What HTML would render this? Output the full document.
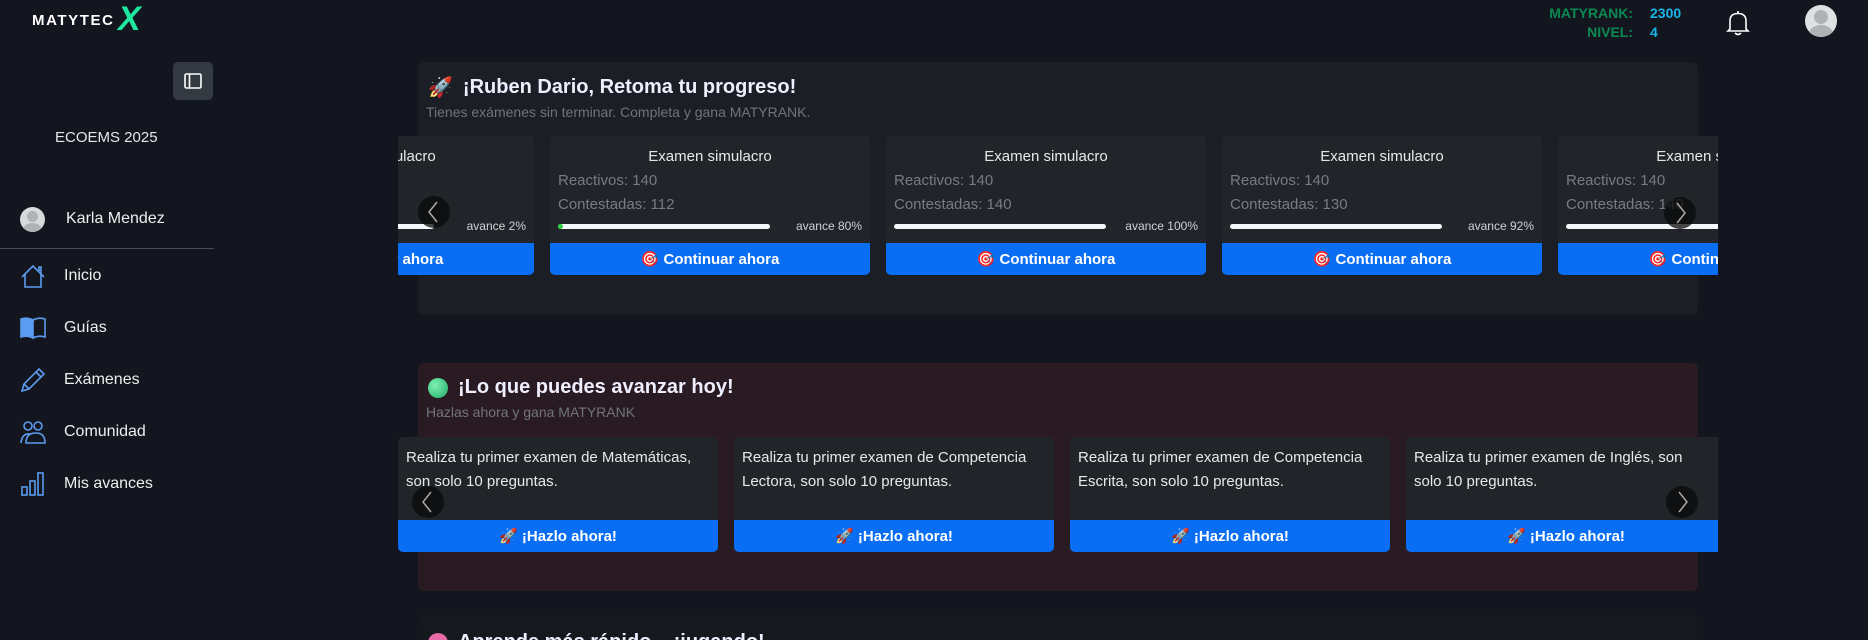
<!DOCTYPE html>
<html><head><meta charset="utf-8"><style>
*{box-sizing:border-box;margin:0;padding:0}
html,body{width:1868px;height:640px;overflow:hidden}
body{background:#13161e;font-family:"Liberation Sans","Noto Sans CJK JP",sans-serif;color:#e6e6e6;position:relative}
.a{position:absolute}
.nav{position:absolute;left:20px;display:flex;align-items:center;font-size:16px;color:#eee}
.nav svg{width:26px;height:26px;margin-right:18px}
.panel{position:absolute;left:418px;width:1280px;border-radius:6px}
.ptitle{position:absolute;left:10px;font-size:20px;font-weight:bold;color:#eef;display:flex;align-items:center;gap:10px}
.psub{position:absolute;left:8px;font-size:14px;color:#6f757d}
.clip{position:absolute;left:398px;width:1320px;overflow:hidden}
.card{position:absolute;top:0;width:320px;background:#212529;border-radius:5px;overflow:hidden}
.c1 .t{position:absolute;top:12px;left:0;right:0;text-align:center;font-size:15px;color:#e8e8e8}
.c1 .r{position:absolute;left:8px;font-size:15px;color:#777c82}
.bar{position:absolute;left:8px;top:88px;width:212px;height:5px;border-radius:3px;background:#f5f7fa}
.av{position:absolute;right:8px;top:83px;font-size:12px;color:#cfd3d8}
.btn{position:absolute;left:0;right:0;bottom:0;height:32px;background:#0a6ef4;color:#fff;font-weight:bold;font-size:15px;display:flex;align-items:center;justify-content:center;gap:10px}
.c2 .t{position:absolute;top:9px;left:8px;right:22px;font-size:15px;line-height:24px;color:#e8e8e8}
.arr{position:absolute;width:32px;height:32px;border-radius:50%;background:rgba(10,10,10,.75)}
</style></head><body>

<!-- logo -->
<div class="a" style="left:32px;top:12px;font-size:15px;font-weight:bold;letter-spacing:1.6px;color:#fff">MATYTEC</div>
<div class="a" style="left:118px;top:1px;font-size:34px;font-weight:900;color:#1ee8a0;font-style:italic;line-height:36px">X</div>

<!-- toggle -->
<div class="a" style="left:173px;top:62px;width:40px;height:38px;background:#343a42;border-radius:5px">
<svg class="a" style="left:11px;top:11px" width="18" height="16" viewBox="0 0 18 16"><rect x="1" y="1" width="16" height="14" rx="1.5" fill="none" stroke="#fff" stroke-width="1.6"/><line x1="5.5" y1="1" x2="5.5" y2="15" stroke="#fff" stroke-width="1.6"/></svg></div>

<div class="a" style="left:55px;top:129px;font-size:15px;color:#e6e6e6">ECOEMS 2025</div>

<div class="a" style="left:20px;top:207px;width:25px;height:25px;border-radius:50%;background:#d8d9db;overflow:hidden"><div class="a" style="left:7px;top:4px;width:11px;height:11px;border-radius:50%;background:#b0b3b6"></div><div class="a" style="left:3px;top:16px;width:19px;height:14px;border-radius:50%;background:#b0b3b6"></div></div>
<div class="a" style="left:66px;top:210px;font-size:16px;color:#eee">Karla Mendez</div>
<div class="a" style="left:0;top:248px;width:214px;height:1px;background:#4a4f57"></div>

<div class="nav" style="top:263px"><svg viewBox="0 0 26 26" fill="none" stroke="#5b9cf0" stroke-width="1.6"><path d="M2 14 L13 3 L24 14 M5 11 V24 H21 V11 M19 8 V4 H21 V10"/></svg>Inicio</div>
<div class="nav" style="top:315px"><svg viewBox="0 0 26 26" fill="none" stroke="#5b9cf0" stroke-width="1.6"><path d="M1 4 Q7 2 13 5 V23 Q7 20 1 22 Z" fill="#5b9cf0"/><path d="M13 5 Q19 2 25 4 V22 Q19 20 13 23"/></svg>Guías</div>
<div class="nav" style="top:367px"><svg viewBox="0 0 26 26" fill="none" stroke="#5b9cf0" stroke-width="1.6"><path d="M19 2 L24 7 L9 22 L2 24 L4 17 Z M16 5 L21 10 M4 17 L9 22"/></svg>Exámenes</div>
<div class="nav" style="top:419px"><svg viewBox="0 0 26 26" fill="none" stroke="#5b9cf0" stroke-width="1.6"><circle cx="8" cy="7" r="4"/><circle cx="18" cy="7" r="4"/><path d="M1 24 Q2 14 10 15 M6 24 Q6 14 16 14 Q25 14 25 24 Z"/></svg>Comunidad</div>
<div class="nav" style="top:471px"><svg viewBox="0 0 26 26" fill="none" stroke="#5b9cf0" stroke-width="1.6"><rect x="2" y="16" width="5" height="8"/><rect x="10" y="10" width="5" height="14"/><rect x="18" y="2" width="5" height="22"/></svg>Mis avances</div>

<!-- header right -->
<div class="a" style="left:1500px;top:4px;width:133px;text-align:right;font-size:14px;font-weight:bold;color:#0a8a52;line-height:19px">MATYRANK:<br>NIVEL:</div>
<div class="a" style="left:1650px;top:4px;font-size:14px;font-weight:bold;color:#17b5e8;line-height:19px">2300<br>4</div>
<svg class="a" style="left:1726px;top:9px" width="24" height="27" viewBox="0 0 24 27" fill="none" stroke="#fff" stroke-width="1.6"><path d="M12 2 V4 M4 20 V12 Q4 4.5 12 4.5 Q20 4.5 20 12 V20 L22 22 H2 Z M9 24 Q12 27 15 24"/></svg>
<div class="a" style="left:1805px;top:5px;width:32px;height:32px;border-radius:50%;background:#dfe0e2;overflow:hidden"><div class="a" style="left:9px;top:5px;width:14px;height:14px;border-radius:50%;background:#b0b3b6"></div><div class="a" style="left:4px;top:20px;width:24px;height:18px;border-radius:50%;background:#b0b3b6"></div></div>

<!-- panel 1 -->
<div class="panel" style="top:62px;height:253px;background:#1b1e24">
<div class="ptitle" style="top:13px">🚀 <span>¡Ruben Dario, Retoma tu progreso!</span></div>
<div class="psub" style="top:42px">Tienes exámenes sin terminar. Completa y gana MATYRANK.</div>
</div>
<div class="clip" style="top:136px;height:140px">
 <div class="card c1" style="left:-184px;height:139px"><div class="t">Examen simulacro</div><div class="bar"><div style="width:5px;height:5px;background:#2ecc40;border-radius:3px"></div></div><div class="av">avance 2%</div><div class="btn">🎯 Continuar ahora</div></div>
 <div class="card c1" style="left:152px;height:139px"><div class="t">Examen simulacro</div><div class="r" style="top:36px">Reactivos: 140</div><div class="r" style="top:60px">Contestadas: 112</div><div class="bar"><div style="width:5px;height:5px;background:#2ecc40;border-radius:3px"></div></div><div class="av">avance 80%</div><div class="btn">🎯 Continuar ahora</div></div>
 <div class="card c1" style="left:488px;height:139px"><div class="t">Examen simulacro</div><div class="r" style="top:36px">Reactivos: 140</div><div class="r" style="top:60px">Contestadas: 140</div><div class="bar"></div><div class="av">avance 100%</div><div class="btn">🎯 Continuar ahora</div></div>
 <div class="card c1" style="left:824px;height:139px"><div class="t">Examen simulacro</div><div class="r" style="top:36px">Reactivos: 140</div><div class="r" style="top:60px">Contestadas: 130</div><div class="bar"></div><div class="av">avance 92%</div><div class="btn">🎯 Continuar ahora</div></div>
 <div class="card c1" style="left:1160px;height:139px"><div class="t">Examen simulacro</div><div class="r" style="top:36px">Reactivos: 140</div><div class="r" style="top:60px">Contestadas: 140</div><div class="bar"></div><div class="av">avance 100%</div><div class="btn">🎯 Continuar ahora</div></div>
 <div class="arr" style="left:20px;top:60px"><svg width="32" height="32"><path d="M19 6 L11 16 L19 26" fill="none" stroke="#aaa" stroke-width="1.5"/></svg></div>
 <div class="arr" style="left:1266px;top:61px"><svg width="32" height="32"><path d="M13 6 L21 16 L13 26" fill="none" stroke="#aaa" stroke-width="1.5"/></svg></div>
</div>

<!-- panel 2 -->
<div class="panel" style="top:363px;height:228px;background:#2a1b22">
<div class="ptitle" style="top:13px"><span style="display:inline-block;width:20px;height:20px;border-radius:50%;background:radial-gradient(circle at 35% 35%,#7ef0b0,#1fae6a)"></span><span>¡Lo que puedes avanzar hoy!</span></div>
<div class="psub" style="top:41px">Hazlas ahora y gana MATYRANK</div>
</div>
<div class="clip" style="top:437px;height:116px">
 <div class="card c2" style="left:0;height:115px"><div class="t">Realiza tu primer examen de Matemáticas, son solo 10 preguntas.</div><div class="btn">🚀 ¡Hazlo ahora!</div></div>
 <div class="card c2" style="left:336px;height:115px"><div class="t">Realiza tu primer examen de Competencia Lectora, son solo 10 preguntas.</div><div class="btn">🚀 ¡Hazlo ahora!</div></div>
 <div class="card c2" style="left:672px;height:115px"><div class="t">Realiza tu primer examen de Competencia Escrita, son solo 10 preguntas.</div><div class="btn">🚀 ¡Hazlo ahora!</div></div>
 <div class="card c2" style="left:1008px;height:115px"><div class="t">Realiza tu primer examen de Inglés, son solo 10 preguntas.</div><div class="btn">🚀 ¡Hazlo ahora!</div></div>
 <div class="arr" style="left:14px;top:49px"><svg width="32" height="32"><path d="M19 6 L11 16 L19 26" fill="none" stroke="#aaa" stroke-width="1.5"/></svg></div>
 <div class="arr" style="left:1268px;top:49px"><svg width="32" height="32"><path d="M13 6 L21 16 L13 26" fill="none" stroke="#aaa" stroke-width="1.5"/></svg></div>
</div>

<!-- panel 3 -->
<div class="panel" style="top:614px;height:26px;background:#15181d;overflow:hidden;border-radius:6px 6px 0 0">
<div class="ptitle" style="top:17px"><span style="display:inline-block;width:20px;height:20px;border-radius:50%;background:#e86aa8"></span><span>Aprende más rápido... ¡jugando!</span></div>
</div>
</body></html>
